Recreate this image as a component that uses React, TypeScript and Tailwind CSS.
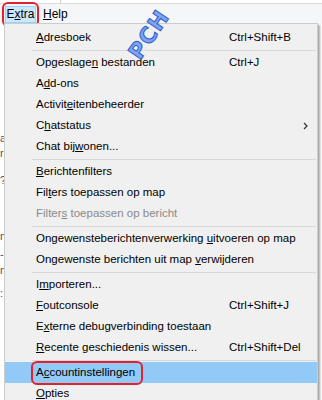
import * as React from "react";

type Item =
  | { kind: "sep" }
  | {
      kind: "item";
      pre: string;
      key: string;
      post: string;
      shortcut?: string;
      sub?: boolean;
      disabled?: boolean;
      active?: boolean;
    };

const items: Item[] = [
  { kind: "item", pre: "", key: "A", post: "dresboek", shortcut: "Ctrl+Shift+B" },
  { kind: "sep" },
  { kind: "item", pre: "Opgeslage", key: "n", post: " bestanden", shortcut: "Ctrl+J" },
  { kind: "item", pre: "A", key: "d", post: "d-ons" },
  { kind: "item", pre: "Activit", key: "e", post: "itenbeheerder" },
  { kind: "item", pre: "C", key: "h", post: "atstatus", sub: true },
  { kind: "item", pre: "Chat bij", key: "w", post: "onen..." },
  { kind: "sep" },
  { kind: "item", pre: "", key: "B", post: "erichtenfilters" },
  { kind: "item", pre: "Fil", key: "t", post: "ers toepassen op map" },
  { kind: "item", pre: "Filter", key: "s", post: " toepassen op bericht", disabled: true },
  { kind: "sep" },
  { kind: "item", pre: "Ongewensteberichtenverwerking ", key: "u", post: "itvoeren op map" },
  { kind: "item", pre: "Ongewenste berichten uit map ", key: "v", post: "erwijderen" },
  { kind: "sep" },
  { kind: "item", pre: "I", key: "m", post: "porteren..." },
  { kind: "item", pre: "", key: "F", post: "outconsole", shortcut: "Ctrl+Shift+J" },
  { kind: "item", pre: "E", key: "x", post: "terne debugverbinding toestaan" },
  { kind: "item", pre: "", key: "R", post: "ecente geschiedenis wissen...", shortcut: "Ctrl+Shift+Del" },
  { kind: "sep" },
  { kind: "item", pre: "A", key: "c", post: "countinstellingen", active: true },
  { kind: "item", pre: "", key: "O", post: "pties" },
];

// bits of the folder pane peeking out left of the menu
const fragments = [
  { top: 130, ch: "a" },
  { top: 145, ch: "r" },
  { top: 172, ch: "?" },
  { top: 228, ch: "n" },
  { top: 246, ch: "-" },
  { top: 262, ch: "n" },
  { top: 285, ch: ":" },
];

export default function App() {
  return (
    <div
      className="relative w-[322px] h-[400px] overflow-hidden bg-white text-[11.5px] text-black"
      style={{ fontFamily: '"Liberation Sans", Arial, sans-serif' }}
    >
      <div className="h-[3px] bg-white flex">
        <div className="ml-[60px] w-px h-full bg-[#c8c8c8]" />
      </div>
      <div className="h-px bg-[#dcdcdc]" />

      {/* menubar */}
      <div className="h-[20px] bg-[#f5f6f7] flex items-center text-[12px]">
        <div className="relative ml-[5px] h-[17px] w-[31px] bg-[#cce8ff] border border-[#99d1ff] flex items-center justify-center">
          E<u>x</u>tra
          <div className="absolute -left-[4px] -top-[5px] w-[37px] h-[25px] rounded-[6px] border-2 border-[#e3202c]" />
        </div>
        <div className="ml-[7px]">
          <u>H</u>elp
        </div>
      </div>

      {fragments.map((f) => (
        <div
          key={f.top}
          className="absolute left-0 w-[4px] overflow-hidden text-[11px] text-[#555]"
          style={{ top: f.top }}
        >
          {f.ch}
        </div>
      ))}

      {/* dropdown */}
      <div className="absolute left-[4px] top-[23px] w-[314px] bg-[#f0f0f0] border border-[#cccccc] shadow-[2px_2px_2px_rgba(0,0,0,0.35)] pt-[3px] pb-[3px]">
        {items.map((it, i) =>
          it.kind === "sep" ? (
            <div key={i} className="h-[4px] flex items-center pl-[27px] pr-px">
              <div className="h-px w-full bg-[#d7d7d7]" />
            </div>
          ) : (
            <div
              key={i}
              className={
                "relative h-[21px] flex items-center pl-[31px] " +
                (it.active ? "bg-[#91c9f7] " : "") +
                (it.disabled ? "text-[#8a8a8a]" : "text-black")
              }
            >
              <span className="w-[193px] shrink-0 whitespace-nowrap">
                {it.pre}
                <u>{it.key}</u>
                {it.post}
              </span>
              {it.shortcut && <span className="whitespace-nowrap">{it.shortcut}</span>}
              {it.sub && (
                <svg
                  className="absolute right-[9px] top-[7px]"
                  width="5"
                  height="8"
                  viewBox="0 0 5 8"
                >
                  <path d="M1 1l3 3-3 3" fill="none" stroke="#333" strokeWidth="1.2" />
                </svg>
              )}
              {it.active && (
                <div className="absolute left-[26px] top-[-1px] w-[112px] h-[24px] rounded-[6px] border-2 border-[#e3202c]" />
              )}
            </div>
          )
        )}
      </div>

      {/* watermark */}
      <div
        className="absolute left-[122px] top-[18px] -rotate-[56deg] text-[22px] font-bold text-[#7fa3ee] tracking-[1px]"
        style={{ fontFamily: '"DejaVu Sans", sans-serif', WebkitTextStroke: "1px #2a5bd0" }}
      >
        PCH
      </div>
    </div>
  );
}
